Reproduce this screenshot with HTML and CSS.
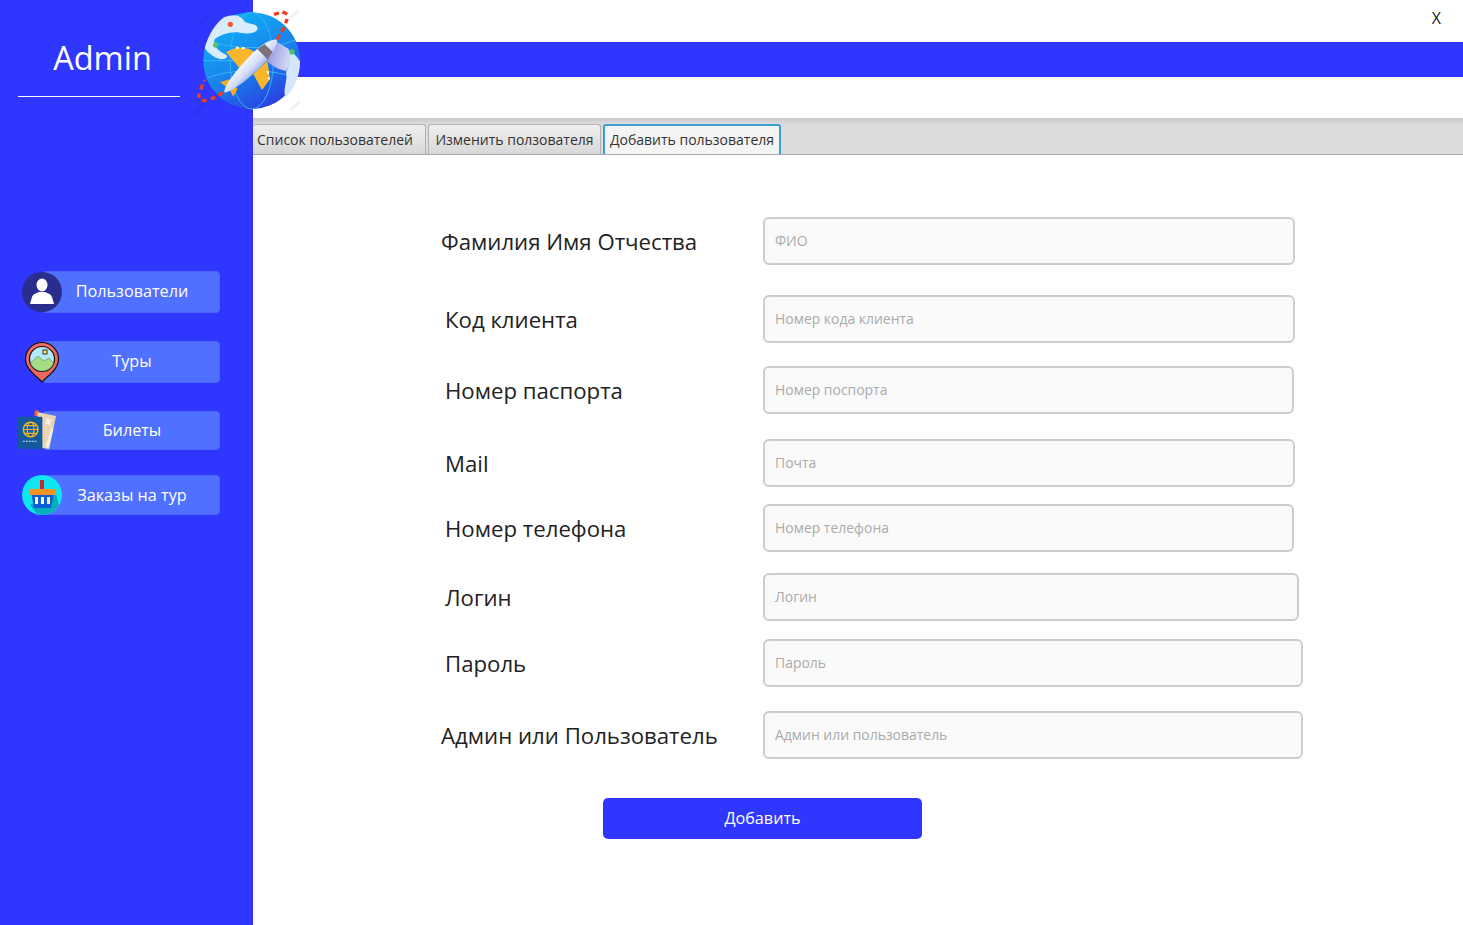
FILE: index.html
```html
<!doctype html>
<html lang="ru">
	<head>
		<meta charset="UTF-8">
		<title>Admin</title>
		<link rel="stylesheet" href="styles.css">
	</head>
	<body>
		<div class="app">
			<div class="sidebar">
				<div class="brand">Admin</div>
				<div class="menu">
					<div class="menu-item menu-users">
						<svg class="menu-icon icon-user" viewBox="0 0 40 40">
							<circle cx="20" cy="20" r="20" fill="#2b2d8e"/>
							<ellipse cx="20" cy="13" rx="5.500" ry="6.500" fill="#fff"/>
							<path d="M8 32 L10 25 C11 22 15 21 17 20 L23 20 C25 21 29 22 30 25 L32 32 Z" fill="#fff"/>
						</svg>
						<span>Пользователи</span>
					</div>
					<div class="menu-item menu-tours">
						<svg class="menu-icon icon-pin" viewBox="0 0 36 42">
							<path d="M18 41 C14 36 1.500 29 1.500 18 A16.500 16.500 0 0 1 34.500 18 C34.500 29 22 36 18 41 Z" fill="#f0685f" stroke="#111" stroke-width="1.200"/>
							<circle cx="18" cy="18" r="12.500" fill="#b5e8f8" stroke="#111" stroke-width="1.200"/>
							<path d="M6.500 22 L14 15 L20 20 L25 17 L29.500 22 C28 27 23 30 18 30 C13 30 8.500 27 6.500 22 Z" fill="#a5dc86" stroke="#4c7a3c" stroke-width="0.500"/>
							<rect x="19" y="9" width="4" height="4" fill="#fbe35a" stroke="#111" stroke-width="0.800"/>
						</svg>
						<span>Туры</span>
					</div>
					<div class="menu-item menu-tickets">
						<svg class="menu-icon icon-tickets" viewBox="0 0 40 42">
							<path d="M17 1 L21 0 L21 6 L17 6 Z" fill="#f0652f"/>
							<path d="M20 2 L39 6 L32 40 L26 39 L20 38 Z" fill="#e8d3b4"/>
							<path d="M28 37 L35 17 L36 20 L31 40 Z" fill="#f6eedf"/>
							<path d="M29 8 L33 10 L36 9 L33 12 L33 17 L31 14 L27 15 L29 12 Z" fill="#f6f1e6"/>
							<rect x="0" y="7" width="25" height="33" rx="1.500" fill="#125a9c"/>
							<circle cx="13" cy="20" r="7.500" fill="none" stroke="#eeb32a" stroke-width="1.500"/>
							<ellipse cx="13" cy="20" rx="3.500" ry="7.500" fill="none" stroke="#eeb32a" stroke-width="1.200"/>
							<path d="M5.500 20 H20.500 M7 16 H19 M7 24 H19" stroke="#eeb32a" stroke-width="1.200"/>
							<path d="M5 32 H20" stroke="#cfe4f5" stroke-width="1.200" stroke-dasharray="2 1"/>
						</svg>
						<span>Билеты</span>
					</div>
					<div class="menu-item menu-orders">
						<svg class="menu-icon icon-basket" viewBox="0 0 40 40">
							<circle cx="20" cy="20" r="20" fill="#10e6f2"/>
							<path d="M33 15 L37 30 A20 20 0 0 1 20 40 L15 39 L8 30 Z" fill="#08aebc"/>
							<rect x="18" y="5" width="4" height="10" fill="#c6282c"/>
							<rect x="7" y="14" width="27" height="6" rx="1" fill="#f59323"/>
							<path d="M9.500 20 H31.500 L29 33 H12 Z" fill="#0d5fd8"/>
							<rect x="13" y="22" width="3" height="7" fill="#fff"/>
							<rect x="19" y="22" width="3" height="7" fill="#fff"/>
							<rect x="25" y="22" width="3" height="7" fill="#fbeaa0"/>
						</svg>
						<span>Заказы на тур</span>
					</div>
				</div>
			</div>

			<div class="content">
				<div class="topbar"><span class="close">X</span></div>
				<div class="band"></div>
				<div class="gap"></div>
				<div class="tabs">
					<div class="tab tab-list">Список пользователей</div>
					<div class="tab tab-edit">Изменить ползователя</div>
					<div class="tab tab-add">Добавить пользователя</div>
				</div>
				<div class="form">
					<div class="row row-fio">
						<label class="label label-wide">Фамилия Имя Отчества</label>
						<div class="field w532">ФИО</div>
					</div>
					<div class="row row-code">
						<label class="label">Код клиента</label>
						<div class="field w532">Номер кода клиента</div>
					</div>
					<div class="row row-passport">
						<label class="label">Номер паспорта</label>
						<div class="field w531">Номер поспорта</div>
					</div>
					<div class="row row-mail">
						<label class="label">Mail</label>
						<div class="field w532">Почта</div>
					</div>
					<div class="row row-phone">
						<label class="label">Номер телефона</label>
						<div class="field w531">Номер телефона</div>
					</div>
					<div class="row row-login">
						<label class="label">Логин</label>
						<div class="field w536">Логин</div>
					</div>
					<div class="row row-pass">
						<label class="label">Пароль</label>
						<div class="field w540">Пароль</div>
					</div>
					<div class="row row-role">
						<label class="label label-wide">Админ или Пользователь</label>
						<div class="field w540">Админ или пользователь</div>
					</div>
					<button class="add-btn">Добавить</button>
				</div>
			</div>

			<svg class="logo" viewBox="0 0 420 375">
				<defs>
					<linearGradient id="globe" x1="0.2" y1="0.1" x2="0.7" y2="1">
						<stop offset="0" stop-color="#10aef6"/>
						<stop offset="0.55" stop-color="#1b7fea"/>
						<stop offset="1" stop-color="#2a3ce0"/>
					</linearGradient>
					<linearGradient id="body" x1="0" y1="0" x2="0" y2="1">
						<stop offset="0" stop-color="#f2f6ff"/>
						<stop offset="0.6" stop-color="#d5def8"/>
						<stop offset="1" stop-color="#a5b5ee"/>
					</linearGradient>
					<linearGradient id="shade" x1="0" y1="0" x2="1" y2="0.3">
						<stop offset="0" stop-color="#8f8fdc"/>
						<stop offset="1" stop-color="#cfd6f4"/>
					</linearGradient>
				</defs>
				<circle cx="215" cy="182" r="145" fill="url(#globe)"/>
				<g fill="none" stroke="#35b4f8" stroke-width="3">
					<ellipse cx="215" cy="182" rx="65" ry="145"/>
					<path d="M85 120 C150 150 280 150 345 120 M80 235 C150 205 280 205 350 235 M70 182 H360"/>
				</g>
				<path d="M132 52 C160 40 182 45 192 62 C200 74 232 68 233 85 C232 100 205 103 180 98 C150 94 122 104 104 118 C98 135 112 152 135 162 C148 170 140 178 122 178 C104 174 85 160 74 145 C85 105 105 72 132 52 Z" fill="#d8ecfb"/>
				<path d="M322 148 C340 158 352 170 360 185 C360 225 345 262 318 292 C305 275 325 240 318 215 C332 195 330 170 322 148 Z" fill="#d4e6fa"/>
				<path d="M285 122 L325 146 C335 170 332 195 318 212 C300 212 280 200 262 184 Z" fill="url(#shade)"/>
				<circle cx="151" cy="73" r="8" fill="#f0583a"/>
				<circle cx="107" cy="135" r="8" fill="#57c46a"/>
				<circle cx="336" cy="156" r="8" fill="#57c46a"/>
				<path d="M138 156 L172 142 L205 146 L240 165 L192 220 Z" fill="#f8b62c"/>
				<path d="M220 222 L262 182 L270 238 L246 270 Z" fill="#f8b62c"/>
				<path d="M120 246 L150 238 L172 268 L160 290 L148 268 Z" fill="#f5ad25"/>
				<path d="M168 143 h8 M186 144 h8 M264 214 v8 M266 232 v6" stroke="#fff" stroke-width="6"/>
				<g transform="rotate(-45 212 198)">
					<path d="M100 198 C112 184 170 175 240 175 C290 175 318 188 323 198 C318 208 290 221 240 221 C170 221 112 212 100 198 Z" fill="url(#body)"/>
					<path d="M262 176 L288 181 L288 215 L262 220 Z" fill="#7d7078"/>
				</g>
				<g fill="none" stroke="#f03b22" stroke-width="10">
					<path d="M282 43 L297 39 M307 36 L322 42 M321 57 L317 70 M312 82 L305 96 M298 104 L292 118"/>
					<path d="M128 278 L115 286 M106 292 L92 296 M80 302 L66 301 M57 294 L56 280 M62 268 L68 253"/>
				</g>
				<path d="M70 243 L77 241" stroke="#f03b22" stroke-width="5"/>
				<g stroke="#000" stroke-opacity="0.05" stroke-width="10">
					<path d="M58 72 L92 40 M322 62 L356 30 M330 332 L360 304 M40 345 L75 312"/>
				</g>
			</svg>
		</div>
	</body>
</html>
```

FILE: styles.css
```css
*{margin:0;padding:0;box-sizing:border-box;}
html,body{height:100%;}
body{
	background:#fff;
	font-family:"Open Sans","Noto Sans","Liberation Sans",sans-serif;
	overflow:hidden;
}
.app{
	display:flex;
	height:925px;
	position:relative;
}
.logo{
	width:140px;height:125px;
	position:absolute;
	top:0;left:180px;
}

/* sidebar */
.sidebar{
	width:253px;
	flex:none;
	background:#2f37ff;
	padding-left:18px;
}
.brand{
	width:162px;height:97px;
	padding:35px 0 0 7px;
	border-bottom:1px solid #fff;
	color:#fff;
	font-size:32.5px;
	line-height:46px;
	text-align:center;
}
.menu{
	width:202px;
	padding-top:174px;
}
.menu-item{
	width:178px;
	margin-left:24px;
	padding:0 0 2px 2px;
	position:relative;
	display:flex;
	align-items:center;
	justify-content:center;
	background:#5070ff;
	border:1px solid #4a66fb;
	border-radius:4px;
	color:#fff;
	font-size:16.2px;
}
.menu-users{height:42px;margin-bottom:28px;}
.menu-tours{height:42px;margin-bottom:28px;}
.menu-tickets{height:39px;margin-bottom:25px;}
.menu-orders{height:40px;padding-bottom:0;}
.menu-icon{position:absolute;}
.icon-user{width:40px;height:40px;top:0;left:-21px;}
.icon-pin{width:36px;height:42px;top:-1px;left:-19px;}
.icon-tickets{width:39px;height:41px;top:-2px;left:-25px;}
.icon-basket{width:40px;height:40px;top:-1px;left:-21px;}

/* right side */
.content{
	flex:1;
	display:flex;
	flex-direction:column;
}
.topbar{
	height:42px;
	display:flex;
	justify-content:flex-end;
	padding:7px 22px 0 0;
}
.close{
	font-size:16px;
	line-height:22px;
	color:#222;
}
.band{height:35px;background:#2f37ff;}
.gap{height:41px;}
.tabs{
	height:37px;
	display:flex;
	align-items:flex-end;
	gap:2px;
	background:linear-gradient(#c8c8c8,#dcdcdc 6px);
	border-bottom:1px solid #aaa;
}
.tab{
	height:30px;
	padding-top:5px;
	border:1px solid #b4b4b4;
	border-bottom:0;
	border-radius:3px 3px 0 0;
	background:linear-gradient(#efefef,#d8d8d8);
	color:#333;
	font-size:14px;
	line-height:20px;
	text-align:center;
	white-space:nowrap;
}
.tab-list{
	width:173px;
	padding-left:4px;
	border-left:0;
	text-align:left;
}
.tab-edit{width:173px;}
.tab-add{
	width:178px;
	border:2px solid #3ba0d0;
	border-bottom:0;
	background:#f4f4f4;
	padding-top:4px;
}

/* form */
.form{
	flex:1;
	padding-top:62px;
	position:relative;
}
.row{
	height:48px;
	display:flex;
	align-items:center;
	padding-left:192px;
}
.row-code{margin-top:30px;}
.row-passport{margin-top:23px;}
.row-mail{margin-top:25px;}
.row-phone{margin-top:17px;}
.row-login{margin-top:21px;}
.row-pass{margin-top:18px;}
.row-role{margin-top:24px;}
.label{
	width:318px;
	padding-top:2px;
	color:#222;
	font-size:22.2px;
	line-height:30px;
	white-space:nowrap;
}
.label-wide{
	margin-left:-4px;
	width:322px;
}
.field{
	height:48px;
	padding-left:10px;
	border:2px solid #cdcdcd;
	border-radius:6px;
	background:#fafafa;
	color:#ababab;
	font-size:13.95px;
	line-height:44px;
}
.w531{width:531px;}
.w532{width:532px;}
.w536{width:536px;}
.w540{width:540px;}
.add-btn{
	display:block;
	width:319px;height:41px;
	margin:39px 0 0 350px;
	padding-bottom:2px;
	background:#2f37ff;
	border:0;
	border-radius:5px;
	color:#fff;
	font-family:inherit;
	font-size:16.2px;
}
```
